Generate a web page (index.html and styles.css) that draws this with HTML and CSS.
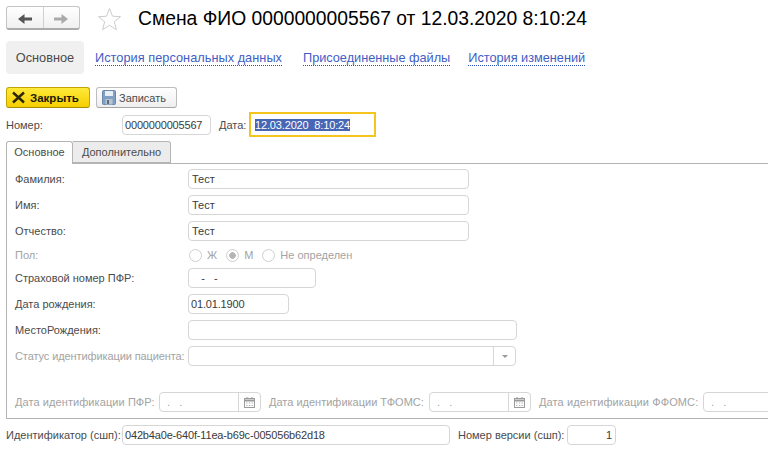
FILE: index.html
```html
<!DOCTYPE html>
<html lang="ru">
<head>
<meta charset="utf-8">
<title>Смена ФИО</title>
<link rel="stylesheet" href="styles.css">
</head>
<body>
<div class="page">
  <header class="head">
    <div class="navgroup">
      <span class="navbtn navbtn-left"><svg width="16" height="12" viewBox="0 0 16 12"><path d="M0 6 6.500 1v3.400H14v3.200H6.500V11z" fill="#555"/></svg></span>
      <span class="navbtn"><svg width="16" height="12" viewBox="0 0 16 12"><path d="M14 6 7.500 1v3.400H0v3.200h7.500V11z" fill="#aaa"/></svg></span>
    </div>
    <svg class="star" width="25" height="24" viewBox="0 0 25 24"><path d="M12.500 1.500 15.500 9.200 23.500 9.700 17.300 14.800 19.400 22.700 12.500 18.300 5.600 22.700 7.700 14.800 1.500 9.700 9.500 9.200z" fill="#fff" stroke="#c9cdd0"/></svg>
    <h1 class="title">Смена ФИО 0000000005567 от 12.03.2020 8:10:24</h1>
  </header>
  <nav class="sections">
    <span class="section-active">Основное</span>
    <a class="link link-first">История персональных данных</a>
    <a class="link">Присоединенные файлы</a>
    <a class="link">История изменений</a>
  </nav>
  <div class="toolbar">
    <button class="btn btn-primary"><svg width="15" height="13" viewBox="0 0 15 13"><path d="M2 1.500 13 11.500M13 1.500 2 11.500" stroke="#2b2600" stroke-width="2.400"/></svg>Закрыть</button>
    <button class="btn"><svg width="14" height="15" viewBox="0 0 14 15"><rect x=".5" y=".5" width="13" height="14" rx="1" fill="#7f9fc4" stroke="#6d87a8"/><rect x="3" y="1" width="8" height="5" fill="#e8eef5"/><rect x="3.500" y="9" width="7" height="5.500" fill="#b9c3cf"/><rect x="5" y="10" width="2" height="4" fill="#5d6d80"/></svg>Записать</button>
  </div>
  <div class="docrow">
    <span class="lbl lbl-num">Номер:</span>
    <span class="field f-num num">0000000005567</span>
    <span class="lbl lbl-date">Дата:</span>
    <span class="focus"><span class="sel">12.03.2020&nbsp; 8:10:24</span></span>
  </div>
  <div class="tabs">
    <span class="tab tab-on">Основное</span>
    <span class="tab">Дополнительно</span>
  </div>
  <section class="panel">
    <div class="row"><span class="rlabel">Фамилия:</span><span class="field f-name">Тест</span></div>
    <div class="row"><span class="rlabel">Имя:</span><span class="field f-name">Тест</span></div>
    <div class="row"><span class="rlabel">Отчество:</span><span class="field f-name">Тест</span></div>
    <div class="row row-radio muted">
      <span class="rlabel">Пол:</span>
      <span class="radio"></span><span class="rtext">Ж</span>
      <span class="radio radio-on"></span><span class="rtext">М</span>
      <span class="radio"></span><span>Не определен</span>
    </div>
    <div class="row"><span class="rlabel">Страховой номер ПФР:</span><span class="field f-snils">&nbsp;&nbsp;&nbsp;-&nbsp;&nbsp;&nbsp;-</span></div>
    <div class="row"><span class="rlabel">Дата рождения:</span><span class="field f-birth num">01.01.1900</span></div>
    <div class="row"><span class="rlabel">МестоРождения:</span><span class="field f-place"></span></div>
    <div class="row muted"><span class="rlabel rlabel-tight">Статус идентификации пациента:</span>
      <span class="field f-status"><span class="fill"></span><span class="addon"><svg width="6" height="3" viewBox="0 0 6 3"><path d="M0 0h6L3 3z" fill="#999"/></svg></span></span>
    </div>
    <div class="row row-dates muted">
      <span class="dlabel dl-pfr">Дата идентификации ПФР:</span>
      <span class="field f-date"><span class="fill dots">&nbsp;&nbsp;.&nbsp;&nbsp;&nbsp;.</span><span class="addon"><svg width="11" height="11" viewBox="0 0 11 11"><rect x=".5" y="1.500" width="10" height="9" fill="none" stroke="#9a9a9a"/><path d="M.5 3.500h10" stroke="#9a9a9a" stroke-width="2"/><path d="M3 0v2M8 0v2" stroke="#9a9a9a"/><path d="M2 6h1.500M4.800 6h1.500M7.500 6h1.500M2 8.500h1.500M4.800 8.500h1.500M7.500 8.500h1.500" stroke="#b5b5b5"/></svg></span></span>
      <span class="dlabel dl-tfoms">Дата идентификации ТФОМС:</span>
      <span class="field f-date"><span class="fill dots">&nbsp;&nbsp;.&nbsp;&nbsp;&nbsp;.</span><span class="addon"><svg width="11" height="11" viewBox="0 0 11 11"><rect x=".5" y="1.500" width="10" height="9" fill="none" stroke="#9a9a9a"/><path d="M.5 3.500h10" stroke="#9a9a9a" stroke-width="2"/><path d="M3 0v2M8 0v2" stroke="#9a9a9a"/><path d="M2 6h1.500M4.800 6h1.500M7.500 6h1.500M2 8.500h1.500M4.800 8.500h1.500M7.500 8.500h1.500" stroke="#b5b5b5"/></svg></span></span>
      <span class="dlabel dl-ffoms">Дата идентификации ФФОМС:</span>
      <span class="field f-date f-cut dots">&nbsp;&nbsp;.&nbsp;&nbsp;&nbsp;.</span>
    </div>
  </section>
  <footer class="foot">
    <span class="lbl lbl-id">Идентификатор (сшп):</span>
    <span class="field f-id num">042b4a0e-640f-11ea-b69c-005056b62d18</span>
    <span class="lbl lbl-ver">Номер версии (сшп):</span>
    <span class="field f-ver">1</span>
  </footer>
</div>
</body>
</html>
```
FILE: styles.css
```css
html, body {
  margin: 0;
  height: 460px;
  overflow: hidden;
  background: #fff;
}
.page {
  width: 768px;
  height: 460px;
  overflow: hidden;
  padding: 6px 0 0 6px;
  box-sizing: border-box;
  font: 11px/16px "Liberation Sans", Arial, sans-serif;
  color: #4b4b4b;
}
.head {
  display: flex;
  align-items: center;
  height: 24px;
  width: 760px;
}
.navgroup {
  display: flex;
  flex: none;
  width: 74px;
  height: 24px;
  box-sizing: border-box;
  border: 1px solid #c4c4c4;
  border-bottom: 2px solid #ababab;
  border-radius: 3px;
  background: linear-gradient(#fff, #f0f0f0);
}
.navbtn {
  flex: 1;
  display: flex;
  align-items: center;
  justify-content: center;
  padding: 2px 0 0 2px;
}
.navbtn-left { border-right: 1px solid #d0d0d0; }
.star { flex: none; margin: 2px 16px 0 17px; }
.title {
  margin: 2px 0 0;
  font: 400 19.300px/24px "Liberation Sans", Arial, sans-serif;
  color: #000;
  white-space: nowrap;
}
.sections {
  display: flex;
  align-items: center;
  margin-top: 11px;
  height: 33px;
  font-size: 12.750px;
}
.section-active {
  width: 78px;
  height: 33px;
  line-height: 33px;
  text-align: center;
  background: #f0f0f0;
  border-radius: 4px;
  margin-right: 11px;
}
.link {
  color: #3f5ec4;
  border-bottom: 1px dotted #2f4fb8;
  line-height: 15px;
  margin-right: 18px;
  letter-spacing: -.02px;
}
.link-first { margin-right: 21px; letter-spacing: .03px; }
.toolbar {
  display: flex;
  gap: 6px;
  margin-top: 13px;
  height: 21px;
}
.btn {
  display: flex;
  align-items: center;
  gap: 3px;
  width: 81px;
  height: 21px;
  padding: 0 0 0 5px;
  box-sizing: border-box;
  border: 1px solid #bdbdbd;
  border-bottom-color: #a5a5a5;
  border-radius: 3px;
  background: linear-gradient(#fff, #eee);
  font: 11px "Liberation Sans", Arial, sans-serif;
  color: #4b4b4b;
}
.btn-primary {
  width: 84px;
  padding-left: 4px;
  gap: 4px;
  background: linear-gradient(#ffe93a, #f5cf00);
  border-color: #c3a400;
  border-bottom-color: #a68c00;
  color: #1c1800;
  font-size: 11.500px;
  font-weight: 700;
}
.field {
  display: block;
  flex: none;
  height: 20px;
  line-height: 18px;
  box-sizing: border-box;
  border: 1px solid #d6d6d6;
  border-radius: 4px;
  padding: 0 3px;
  background: #fff;
  color: #3a3a3a;
  white-space: nowrap;
}
.num { letter-spacing: -.17px; text-indent: -1px; }
.dots { text-indent: -2px; }
.docrow {
  display: flex;
  align-items: center;
  height: 25px;
  margin-top: 4px;
}
.lbl { white-space: nowrap; flex: none; }
.lbl-num { width: 116px; }
.f-num { width: 89px; }
.lbl-date { margin-left: 8px; width: 30px; }
.focus {
  display: block;
  width: 127px;
  height: 25px;
  box-sizing: border-box;
  border: 2px solid #f6c51d;
  padding: 5px 4px;
  line-height: 12px;
}
.sel {
  background: #4766b5;
  color: #fff;
  display: inline-block;
  height: 12px;
  line-height: 12px;
  letter-spacing: -.15px;
  vertical-align: top;
}
.tabs {
  display: flex;
  margin-top: 4px;
  height: 23px;
  position: relative;
  z-index: 1;
}
.tab {
  box-sizing: border-box;
  height: 22px;
  line-height: 21px;
  width: 98px;
  border: 1px solid #b4b4b4;
  border-left: 0;
  border-radius: 0 3px 0 0;
  background: #ececec;
  text-align: center;
}
.tab-on {
  width: 67px;
  height: 23px;
  border-left: 1px solid #b4b4b4;
  border-bottom: 0;
  border-radius: 3px 3px 0 0;
  background: #fff;
}
.panel {
  width: 780px;
  height: 256px;
  margin-top: -1px;
  box-sizing: border-box;
  border: 1px solid #b4b4b4;
  padding: 5px 0 0 8px;
}
.row {
  display: flex;
  align-items: center;
  height: 20px;
  margin-bottom: 6px;
}
.rlabel {
  flex: none;
  width: 173px;
  white-space: nowrap;
}
.rlabel-tight { letter-spacing: -.1px; }
.muted, .muted .field { color: #a3a3a3; }
.f-name { width: 281px; }
.f-snils { width: 128px; }
.f-birth { width: 101px; }
.f-place { width: 329px; }
.f-status, .f-date { display: flex; padding-right: 0; }
.f-status { width: 328px; }
.fill { flex: 1; }
.addon {
  display: flex;
  align-items: center;
  justify-content: center;
  width: 21px;
  border-left: 1px solid #d6d6d6;
}
.row-radio { height: 16px; margin: 0 0 5px; }
.radio {
  flex: none;
  width: 13px;
  height: 13px;
  box-sizing: border-box;
  border: 1px solid #cfcfcf;
  border-radius: 50%;
  margin: 0 5px 0 1px;
  background: #fff;
}
.radio-on {
  background: radial-gradient(circle, #b5b5b5 0 3px, #fff 3.500px);
}
.rtext { margin-right: 8px; }
.row-dates {
  margin-top: 26px;
  margin-bottom: 0;
}
.dlabel { flex: none; white-space: nowrap; }
.dl-pfr { width: 144px; letter-spacing: .08px; }
.dl-tfoms { width: 160px; }
.dl-ffoms { width: 164px; letter-spacing: .1px; }
.f-date { width: 102px; margin-right: 8px; }
.f-cut { display: block; width: 80px; margin-right: 0; }
.foot {
  display: flex;
  align-items: center;
  height: 20px;
  margin-top: 6px;
}
.lbl-id { width: 116px; }
.f-id { width: 328px; margin-right: 8px; }
.lbl-ver { width: 109px; }
.f-ver { width: 49px; text-align: right; }
```
